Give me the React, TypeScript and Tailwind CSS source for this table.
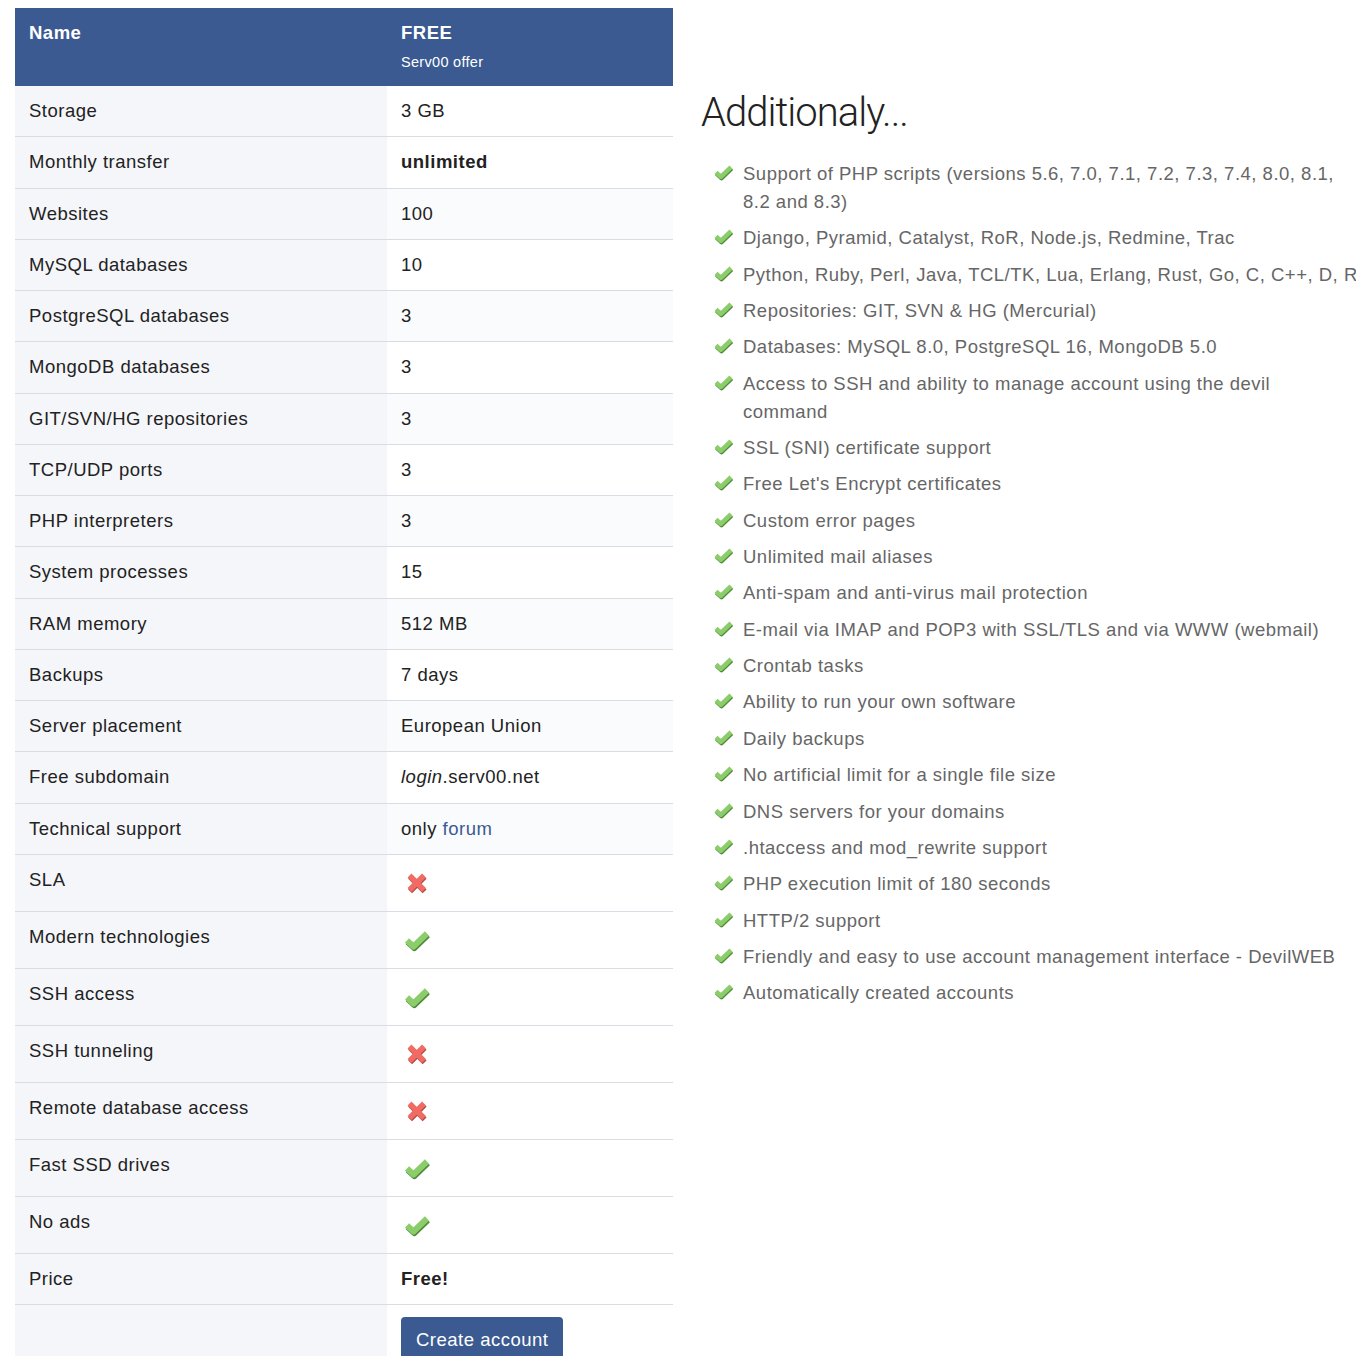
import React from 'react';

type Cell = React.ReactNode;

function Check({ w = 28, h = 24 }: { w?: number; h?: number }) {
  return (
    <svg width={w} height={h} viewBox="0 0 28 24" className="block">
      <polyline points="4,12.5 10.5,18.5 24,5.5" fill="none" stroke="#4f8a37" strokeWidth="6" strokeLinejoin="round" transform="translate(0.8,1.6)" />
      <polyline points="4,12.5 10.5,18.5 24,5.5" fill="none" stroke="#8ccd6b" strokeWidth="6" strokeLinejoin="round" />
    </svg>
  );
}

function Cross() {
  return (
    <svg width={24} height={24} viewBox="0 0 24 24" className="block">
      <g transform="translate(0.6,1.4)" stroke="#b54843" strokeWidth="5.5">
        <line x1="4.5" y1="4.5" x2="19" y2="19" />
        <line x1="19" y1="4.5" x2="4.5" y2="19" />
      </g>
      <g stroke="#ef6b63" strokeWidth="5.5">
        <line x1="4.5" y1="4.5" x2="19" y2="19" />
        <line x1="19" y1="4.5" x2="4.5" y2="19" />
      </g>
    </svg>
  );
}

const rows: [string, Cell][] = [
  ['Storage', '3 GB'],
  ['Monthly transfer', <b>unlimited</b>],
  ['Websites', '100'],
  ['MySQL databases', '10'],
  ['PostgreSQL databases', '3'],
  ['MongoDB databases', '3'],
  ['GIT/SVN/HG repositories', '3'],
  ['TCP/UDP ports', '3'],
  ['PHP interpreters', '3'],
  ['System processes', '15'],
  ['RAM memory', '512 MB'],
  ['Backups', '7 days'],
  ['Server placement', 'European Union'],
  ['Free subdomain', <><i>login</i>.serv00.net</>],
  ['Technical support', <>only <a href="#" className="text-[#3a5a91]">forum</a></>],
];

const iconRows: [string, boolean][] = [
  ['SLA', false],
  ['Modern technologies', true],
  ['SSH access', true],
  ['SSH tunneling', false],
  ['Remote database access', false],
  ['Fast SSD drives', true],
  ['No ads', true],
];

const extras = [
  'Support of PHP scripts (versions 5.6, 7.0, 7.1, 7.2, 7.3, 7.4, 8.0, 8.1, 8.2 and 8.3)',
  'Django, Pyramid, Catalyst, RoR, Node.js, Redmine, Trac',
  'Python, Ruby, Perl, Java, TCL/TK, Lua, Erlang, Rust, Go, C, C++, D, R',
  'Repositories: GIT, SVN & HG (Mercurial)',
  'Databases: MySQL 8.0, PostgreSQL 16, MongoDB 5.0',
  'Access to SSH and ability to manage account using the devil command',
  'SSL (SNI) certificate support',
  "Free Let's Encrypt certificates",
  'Custom error pages',
  'Unlimited mail aliases',
  'Anti-spam and anti-virus mail protection',
  'E-mail via IMAP and POP3 with SSL/TLS and via WWW (webmail)',
  'Crontab tasks',
  'Ability to run your own software',
  'Daily backups',
  'No artificial limit for a single file size',
  'DNS servers for your domains',
  '.htaccess and mod_rewrite support',
  'PHP execution limit of 180 seconds',
  'HTTP/2 support',
  'Friendly and easy to use account management interface - DevilWEB',
  'Automatically created accounts',
];

export default function App() {
  return (
    <div
      className="w-[1356px] h-[1356px] overflow-hidden bg-white flex gap-[28px] pl-[15px] pt-[8px] text-[18.5px] tracking-[0.5px] text-[#222]"
      style={{ fontFamily: '"Liberation Sans", Arial, sans-serif' }}
    >
      <div className="w-[658px] shrink-0">
        <div className="flex bg-[#3a5a91] text-white h-[78px]">
          <div className="w-[372px] px-[14px] pt-3 font-bold leading-[26px]">Name</div>
          <div className="flex-1 px-[14px] pt-3">
            <div className="font-bold leading-[26px]">FREE</div>
            <div className="text-[14.5px] tracking-[0.3px] leading-5 mt-[6px]">Serv00 offer</div>
          </div>
        </div>
        {rows.map(([k, v], i) => (
          <div key={k} className="flex border-b border-[#d9dce3]">
            <div className="w-[372px] bg-[#f5f6fa] px-[14px] py-3 leading-[26.27px]">{k}</div>
            <div className={`flex-1 px-[14px] py-3 leading-[26.27px] ${i > 0 && i % 2 === 0 ? 'bg-[#fafbfc]' : 'bg-white'}`}>{v}</div>
          </div>
        ))}
        {iconRows.map(([k, ok]) => (
          <div key={k} className="flex border-b border-[#d9dce3]">
            <div className="w-[372px] bg-[#f5f6fa] px-[14px] pt-3 pb-[18px] leading-[26px]">{k}</div>
            <div className="flex-1 px-[14px] py-3 h-[56px]">
              <div className="w-[32px] h-[32px] flex items-center justify-center">
                {ok ? <Check /> : <Cross />}
              </div>
            </div>
          </div>
        ))}
        <div className="flex border-b border-[#d9dce3]">
          <div className="w-[372px] bg-[#f5f6fa] px-[14px] py-3 leading-[26px]">Price</div>
          <div className="flex-1 px-[14px] py-3 leading-[26px] font-bold">Free!</div>
        </div>
        <div className="flex">
          <div className="w-[372px] bg-[#f5f6fa] h-[60px]" />
          <div className="flex-1 px-[14px] pt-3">
            <button className="bg-[#3a5a91] text-white rounded-[4px] px-[15px] h-[46px] leading-[44px] text-[18.5px] tracking-[0.5px]">
              Create account
            </button>
          </div>
        </div>
      </div>

      <div className="w-[660px] shrink-0">
        <h2
          className="text-[40px] font-light text-[#222] leading-[44px] mt-[83px] tracking-[-1px]"
          style={{ fontFamily: 'Roboto, "Liberation Sans", sans-serif' }}
        >
          Additionaly...
        </h2>
        <ul className="mt-[25px] pl-[12px] text-[#666] leading-[28px] flex flex-col gap-[8.35px]">
          {extras.map((e) => (
            <li key={e} className="flex gap-[9px]">
              <span className="pt-[3px] shrink-0">
                <Check w={21} h={18} />
              </span>
              <span className="w-[615px]">{e}</span>
            </li>
          ))}
        </ul>
      </div>
    </div>
  );
}
